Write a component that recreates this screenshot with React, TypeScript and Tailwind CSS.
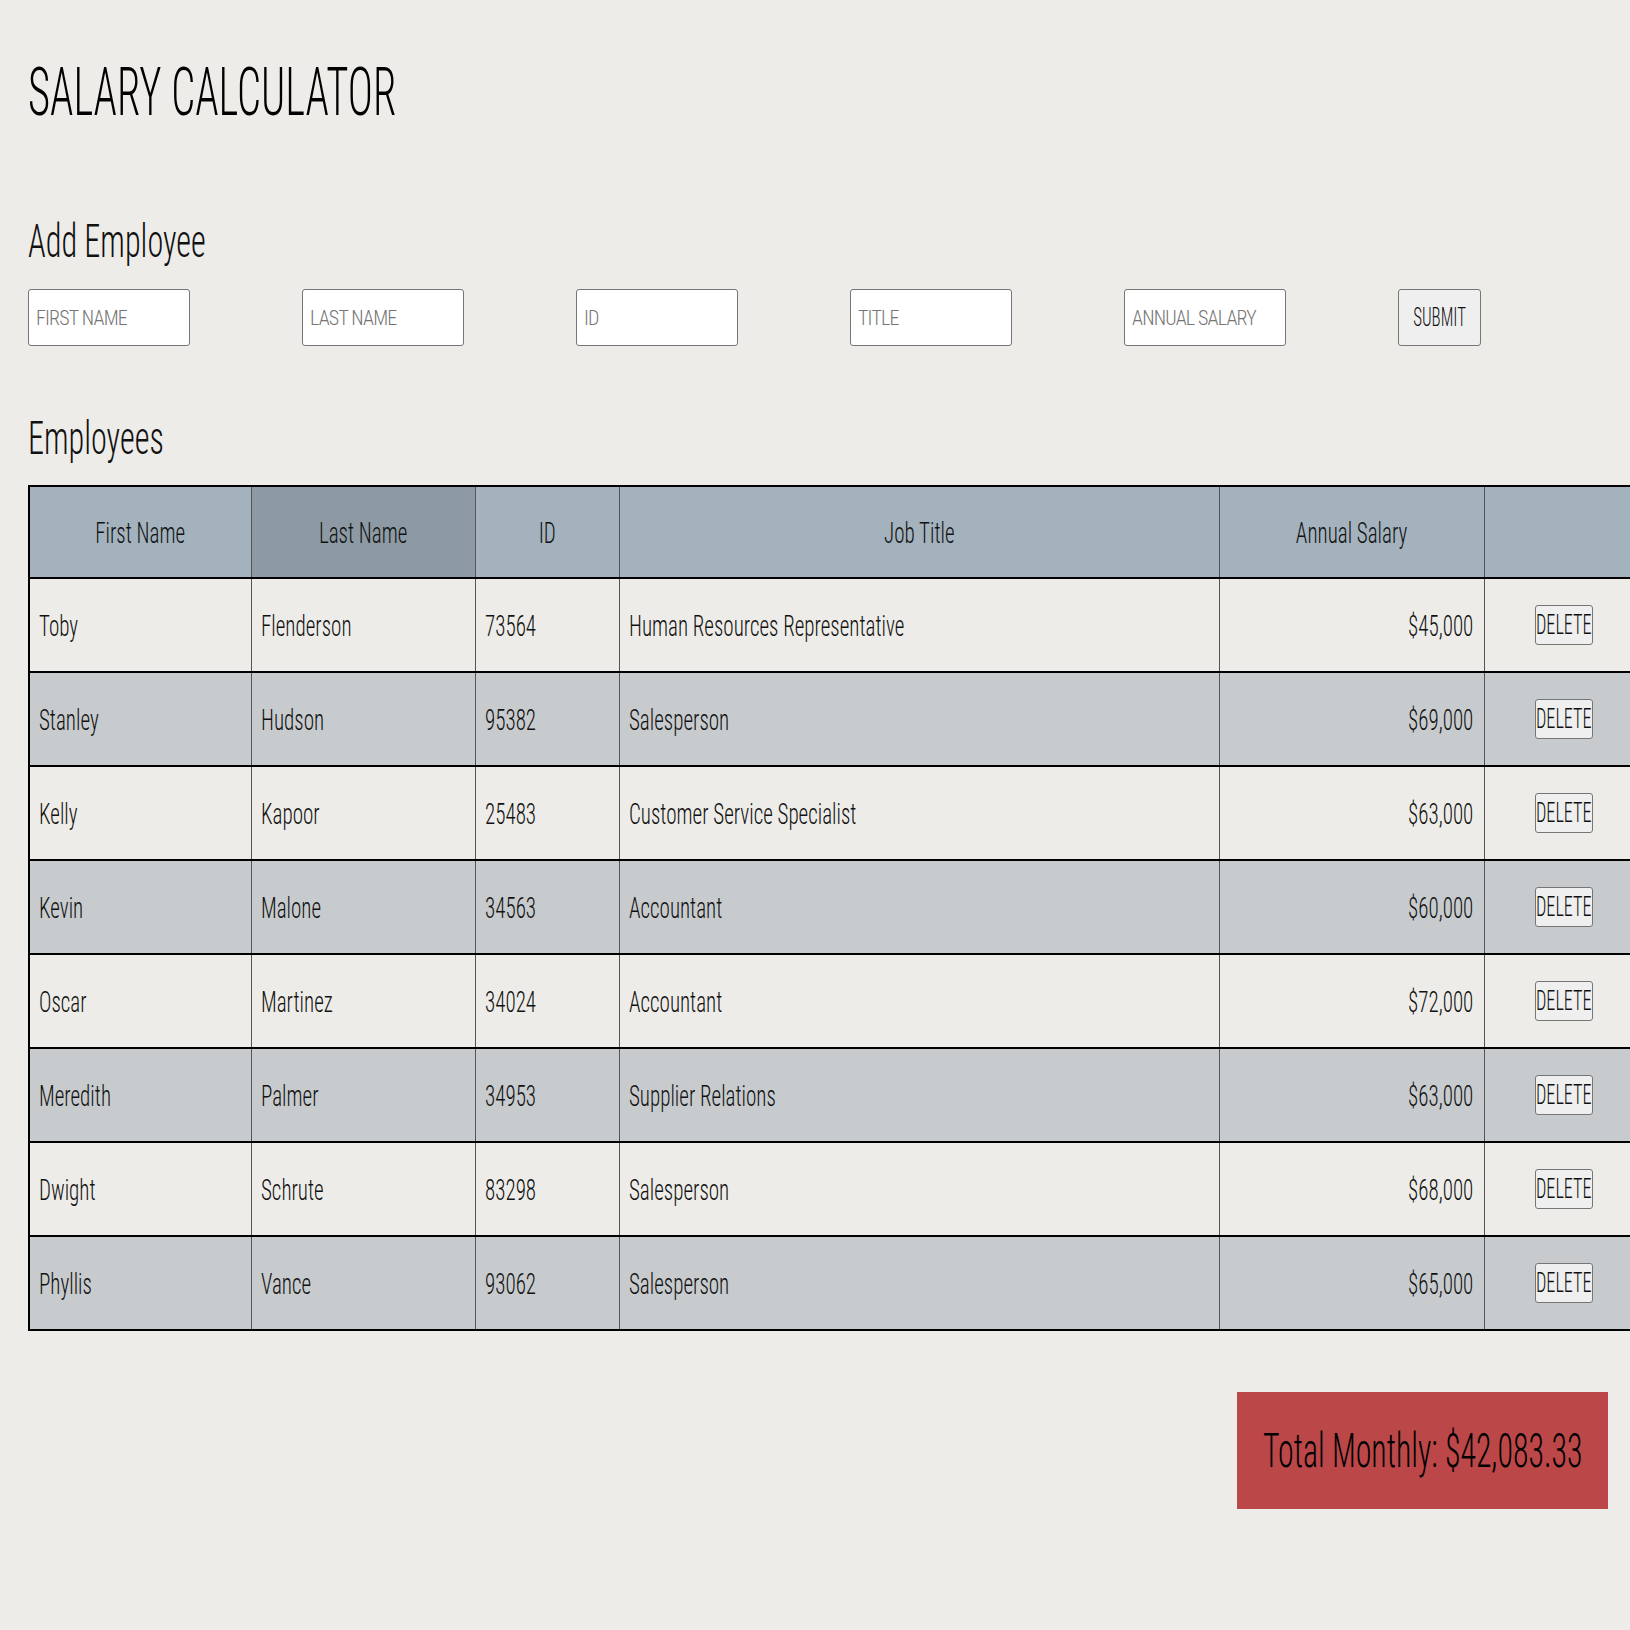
type Employee = {
  first: string;
  last: string;
  id: string;
  title: string;
  salary: number;
};

const employees: Employee[] = [
  { first: "Toby", last: "Flenderson", id: "73564", title: "Human Resources Representative", salary: 45000 },
  { first: "Stanley", last: "Hudson", id: "95382", title: "Salesperson", salary: 69000 },
  { first: "Kelly", last: "Kapoor", id: "25483", title: "Customer Service Specialist", salary: 63000 },
  { first: "Kevin", last: "Malone", id: "34563", title: "Accountant", salary: 60000 },
  { first: "Oscar", last: "Martinez", id: "34024", title: "Accountant", salary: 72000 },
  { first: "Meredith", last: "Palmer", id: "34953", title: "Supplier Relations", salary: 63000 },
  { first: "Dwight", last: "Schrute", id: "83298", title: "Salesperson", salary: 68000 },
  { first: "Phyllis", last: "Vance", id: "93062", title: "Salesperson", salary: 65000 },
];

const money = (n: number, digits = 0) =>
  "$" + n.toLocaleString("en-US", { minimumFractionDigits: digits, maximumFractionDigits: digits });

// the mockup uses a very narrow condensed face, so Roboto Condensed gets squeezed a bit more
function Sq({
  children,
  origin = "origin-left",
  squeeze = "scale-x-[0.70]",
}: {
  children: React.ReactNode;
  origin?: string;
  squeeze?: string;
}) {
  return <span className={`inline-block whitespace-nowrap ${squeeze} ${origin}`}>{children}</span>;
}

const fields = ["FIRST NAME", "LAST NAME", "ID", "TITLE", "ANNUAL SALARY"];

const th = "border-x border-[#555] font-light";
const td = "border-x border-[#555] pl-[9px] pr-[10px]";

export default function App() {
  const total = employees.reduce((sum, e) => sum + e.salary, 0) / 12;

  return (
    <div className="min-h-screen w-max bg-[#edece8] pl-[28px] pt-[60px] pb-[120px] font-['Roboto_Condensed',Roboto,sans-serif] font-light text-[#111]">
      <h1 className="text-[66px] leading-none text-black">
        <Sq squeeze="scale-x-[0.645]">SALARY CALCULATOR</Sq>
      </h1>

      <h2 className="mt-[92px] text-[46px] leading-none">
        <Sq>Add Employee</Sq>
      </h2>
      <div className="mt-[25px] flex gap-[112px]">
        {fields.map((f) => (
          <input
            key={f}
            placeholder={f}
            className="h-[57px] w-[162px] rounded-[3px] border border-[#767676] bg-white px-[7px] text-[20px] tracking-[-0.8px] placeholder:text-[#757575] outline-none"
          />
        ))}
        <button className="flex h-[57px] w-[83px] items-center justify-center rounded-[3px] border border-[#767676] bg-[#efefef] text-[26px] text-[#111]">
          <Sq origin="origin-center" squeeze="scale-x-[0.65]">SUBMIT</Sq>
        </button>
      </div>

      <h2 className="mt-[69px] text-[46px] leading-none">
        <Sq>Employees</Sq>
      </h2>

      <table className="mt-[24px] w-[1615px] table-fixed border-collapse border-2 border-black text-[30px]">
        <colgroup>
          <col className="w-[222px]" />
          <col className="w-[224px]" />
          <col className="w-[144px]" />
          <col className="w-[600px]" />
          <col className="w-[265px]" />
          <col className="w-[160px]" />
        </colgroup>
        <thead>
          <tr className="h-[92px] border-b-2 border-black bg-[#a3b2bd]">
            <th className={th}><Sq origin="origin-center">First Name</Sq></th>
            <th className={`${th} bg-[#8d9aa4]`}><Sq origin="origin-center">Last Name</Sq></th>
            <th className={th}><Sq origin="origin-center">ID</Sq></th>
            <th className={th}><Sq origin="origin-center">Job Title</Sq></th>
            <th className={th}><Sq origin="origin-center">Annual Salary</Sq></th>
            <th className={th}></th>
          </tr>
        </thead>
        <tbody>
          {employees.map((e, i) => (
            <tr key={e.id} className={`h-[94px] border-b-2 border-black ${i % 2 === 1 ? "bg-[#c7cbcd]" : "bg-[#edece8]"}`}>
              <td className={td}><Sq>{e.first}</Sq></td>
              <td className={td}><Sq>{e.last}</Sq></td>
              <td className={td}><Sq>{e.id}</Sq></td>
              <td className={td}><Sq>{e.title}</Sq></td>
              <td className={`${td} text-right`}><Sq origin="origin-right">{money(e.salary)}</Sq></td>
              <td className="border-x border-[#555]">
                <button className="mx-auto flex h-[40px] w-[58px] items-center justify-center rounded-[3px] border border-[#767676] bg-[#efefef] text-[28px] font-light text-[#111]">
                  <Sq origin="origin-center" squeeze="scale-x-[0.65]">DELETE</Sq>
                </button>
              </td>
            </tr>
          ))}
        </tbody>
      </table>

      <div className="mt-[61px] flex w-[1615px] justify-end pr-[35px]">
        <div className="flex h-[117px] w-[371px] items-center justify-center bg-[#bc4749] text-[49px] text-black">
          <Sq origin="origin-center" squeeze="scale-x-[0.65]">Total Monthly: {money(total, 2)}</Sq>
        </div>
      </div>
    </div>
  );
}
